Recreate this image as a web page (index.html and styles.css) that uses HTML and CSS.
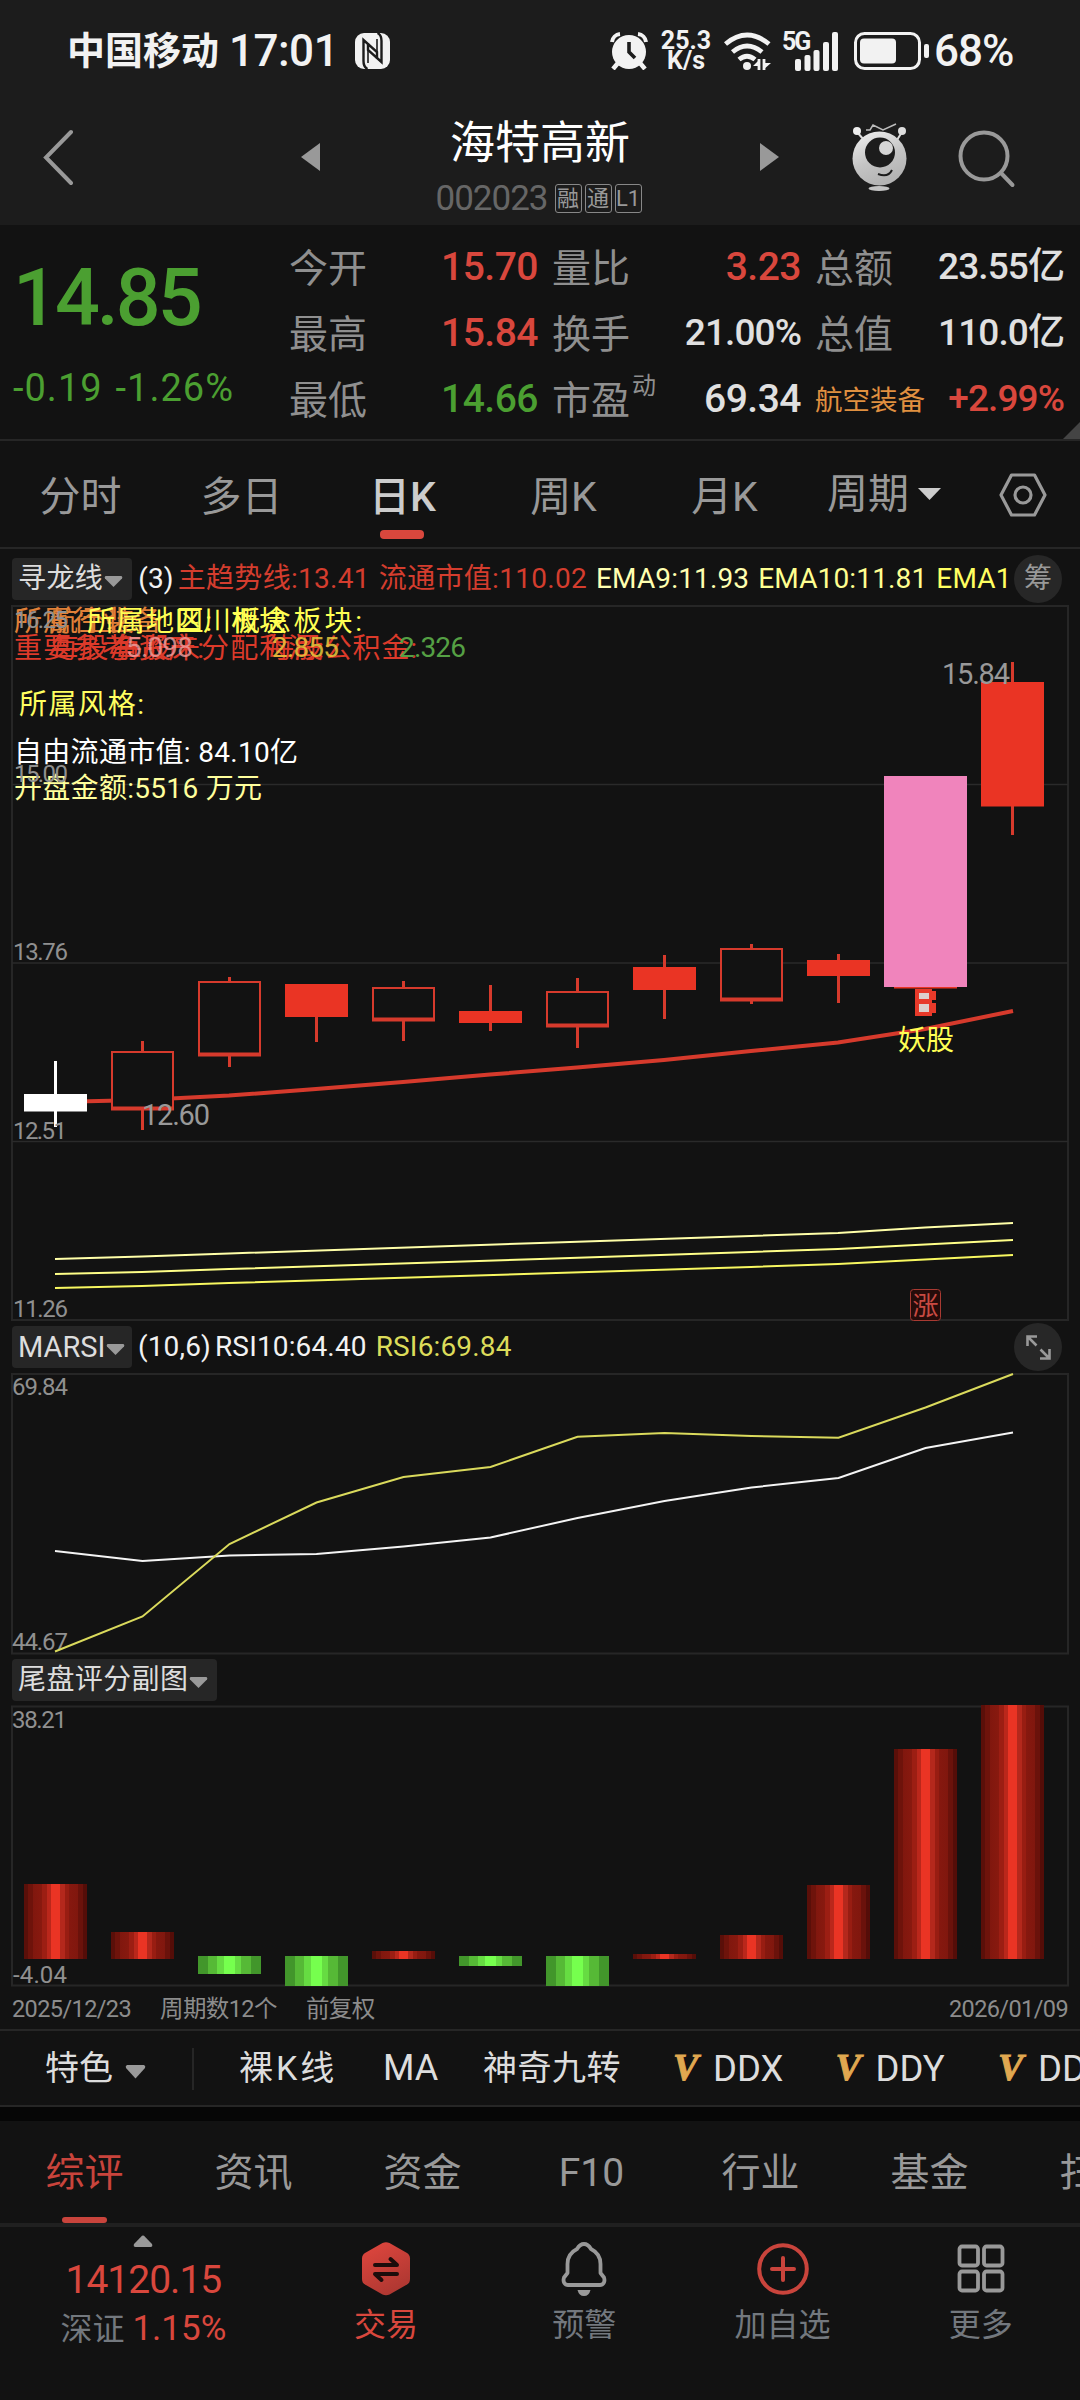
FILE: index.html
```html
<!DOCTYPE html>
<html lang="zh-CN">

<head>
    <meta charset="UTF-8">
    <meta name="viewport" content="width=device-width, initial-scale=1.0">
    <title>海特高新 002023</title>
    <link rel="stylesheet" href="styles.css">
</head>

<body>
    <div class="top">
        <div class="status">
            <span class="carrier">中国移动</span>
            <span class="time">17:01</span>
            <svg class="nfc" width="35" height="36" viewBox="0 0 35 36">
                <rect x="0" y="0" width="35" height="36" rx="9" fill="#f2f2f2" />
                <path d="M12.500 36Q8.500 34 8.500 28V7L22 19V26M22.500 0Q26.500 2 26.500 8V29L13 17V10" fill="none" stroke="#1c1c1c" stroke-width="2.400" />
                <path d="M13 15V30M22 6V21" stroke="#1c1c1c" stroke-width="1.600" />
            </svg>
            <div class="status-right">
                <svg class="alarm" width="38" height="38" viewBox="0 0 38 38">
                    <circle cx="19" cy="20" r="17" fill="#f2f2f2" />
                    <path d="M2 10A9 9 0 0 1 10 2M28 2A9 9 0 0 1 36 10" fill="none" stroke="#f2f2f2" stroke-width="4" />
                    <path d="M8 31L3 37M30 31L35 37" stroke="#f2f2f2" stroke-width="4.500" />
                    <path d="M19 10V20L25 26" fill="none" stroke="#1c1c1c" stroke-width="3.600" />
                </svg>
                <div class="speed"><span>25.3</span><span>K/s</span></div>
                <svg class="wifi" width="48" height="39" viewBox="0 0 48 39">
                    <g fill="none" stroke="#f2f2f2" stroke-width="4.800">
                        <path d="M1.500 12Q23 -6 45 12" />
                        <path d="M8.500 20Q23 8 38 20" />
                        <path d="M15 27.500Q23 21 31 27.500" />
                    </g>
                    <circle cx="23" cy="34" r="4" fill="#f2f2f2" />
                    <path d="M35 27V38M40 27V38" stroke="#f2f2f2" stroke-width="2.800" />
                    <path d="M36 27L29 34H36ZM39 38L47 31H39Z" fill="#f2f2f2" />
                </svg>
                <div class="signal">
                    <span>5G</span>
                    <svg width="44" height="39" viewBox="0 0 44 39">
                        <g fill="#f2f2f2">
                            <rect x="0" y="27" width="6" height="12" rx="2" />
                            <rect x="9.500" y="23" width="6" height="16" rx="2" />
                            <rect x="18.500" y="18" width="6" height="21" rx="2" />
                            <rect x="28" y="10" width="6" height="29" rx="2" />
                            <rect x="37" y="0" width="6" height="39" rx="2" />
                        </g>
                    </svg>
                </div>
                <svg class="battery" width="76" height="39" viewBox="0 0 76 39">
                    <rect x="1.500" y="1.500" width="64" height="35" rx="9" fill="none" stroke="#f2f2f2" stroke-width="3" />
                    <rect x="6" y="6.500" width="36" height="25" rx="4" fill="#f2f2f2" />
                    <rect x="70" y="12" width="5" height="14" rx="2" fill="#f2f2f2" />
                </svg>
                <span class="percent">68%</span>
            </div>
        </div>
        <div class="nav">
            <svg class="back" width="30" height="58" viewBox="0 0 30 58">
                <path d="M28 3L3 28.500L28 54" fill="none" stroke="#999" stroke-width="4" stroke-linecap="round" />
            </svg>
            <svg class="prev" width="19" height="28" viewBox="0 0 19 28"><path d="M19 0V28L0 14Z" fill="#999" /></svg>
            <div class="stock">
                <div class="stock-name">海特高新</div>
                <div class="stock-code"><b>002023</b><i>融</i><i>通</i><i>L1</i></div>
            </div>
            <svg class="next" width="19" height="28" viewBox="0 0 19 28"><path d="M0 0V28L19 14Z" fill="#999" /></svg>
            <svg class="robot" width="56" height="70" viewBox="0 0 56 70">
                <defs>
                    <linearGradient id="robotBody" x1="0" y1="0" x2=".4" y2="1">
                        <stop offset="0" stop-color="#f2f2f2" />
                        <stop offset=".6" stop-color="#c4c4c4" />
                        <stop offset="1" stop-color="#b4b4b4" />
                    </linearGradient>
                </defs>
                <path d="M5 9L12 17M50 9L45 17" stroke="#ddd" stroke-width="2" />
                <circle cx="5" cy="8" r="4" fill="#eee" />
                <circle cx="50" cy="8" r="4" fill="#ddd" />
                <path d="M14 7H18L21 2L31 7L44 1" fill="none" stroke="#bbb" stroke-width="1.500" />
                <circle cx="27.500" cy="35.500" r="27" fill="url(#robotBody)" />
                <circle cx="28" cy="29.500" r="15" fill="#1c1c1c" />
                <circle cx="34" cy="25" r="7" fill="#d5d5d5" />
                <path d="M26 51Q36 55 40 47" fill="none" stroke="#1c1c1c" stroke-width="2" />
                <ellipse cx="27" cy="65.500" rx="10.500" ry="2.500" fill="#c4c4c4" />
            </svg>
            <svg class="search" width="58" height="60" viewBox="0 0 58 60">
                <circle cx="26" cy="28" r="23.500" fill="none" stroke="#999" stroke-width="4" />
                <path d="M43 45L54.500 57" stroke="#999" stroke-width="4" stroke-linecap="round" />
            </svg>
        </div>
    </div>

    <div class="quote">
        <div class="price">
            <div class="price-now">14.85</div>
            <div class="price-diff"><span>-0.19</span><span>-1.26%</span></div>
        </div>
        <div class="quote-grid">
            <div class="cell"><label>今开</label><span class="up">15.70</span></div>
            <div class="cell"><label>量比</label><span class="up">3.23</span></div>
            <div class="cell"><label>总额</label><span class="small">23.55亿</span></div>
            <div class="cell"><label>最高</label><span class="up">15.84</span></div>
            <div class="cell"><label>换手</label><span class="small">21.00%</span></div>
            <div class="cell"><label>总值</label><span class="small">110.0亿</span></div>
            <div class="cell"><label>最低</label><span class="down">14.66</span></div>
            <div class="cell"><label>市盈<sup>动</sup></label><span>69.34</span></div>
            <div class="cell"><label class="sector">航空装备</label><span class="up small">+2.99%</span></div>
        </div>
        <svg class="corner" width="17" height="17" viewBox="0 0 17 17"><path d="M17 0V17H0Z" fill="#444" /></svg>
    </div>

    <div class="periods">
        <div class="period">分时</div>
        <div class="period">多日</div>
        <div class="period active">日K</div>
        <div class="period">周K</div>
        <div class="period">月K</div>
        <div class="period more">周期<svg width="23" height="13" viewBox="0 0 23 13"><path d="M0 0H23L11.500 12Z" fill="#ccc" /></svg></div>
        <svg class="setting" width="48" height="44" viewBox="0 0 48 44">
            <path d="M12.500 2H35.500L46 22L35.500 42H12.500L2 22Z" fill="none" stroke="#999" stroke-width="3.200" stroke-linejoin="round" />
            <circle cx="24" cy="22" r="8" fill="none" stroke="#999" stroke-width="3.200" />
        </svg>
    </div>

    <div class="indicator main-indicator">
        <div class="pick">寻龙线<svg width="19" height="11" viewBox="0 0 19 11"><path d="M1.500 0H17.500Q19 1 18 2.500L9.500 11L1 2.500Q0 1 1.500 0Z" fill="#999" /></svg></div>
        <span class="white param">(3)</span>
        <span class="red">主趋势线:13.41</span>
        <span class="red">流通市值:110.02</span>
        <span class="y1">EMA9:11.93</span>
        <span class="y2">EMA10:11.81</span>
        <span class="y3">EMA1</span>
        <div class="round">筹</div>
    </div>

    <svg class="chart" width="1080" height="718" viewBox="0 604 1080 718">
        <g class="frame">
            <rect x="12" y="606" width="1056" height="714" />
            <path d="M12 784.500H1068M12 963H1068M12 1141.500H1068" />
        </g>

        <path class="trend" d="M55 1102L142 1100L229 1095.500L316 1089L403 1082L490 1074.500L577 1067.500L664 1060L751 1051L838 1042.500L925 1029L1013 1011" />
        <g class="candle hollow">
            <rect x="112" y="1052" width="61" height="57" />
            <rect x="199" y="982" width="61" height="73" />
            <rect x="373" y="988" width="61" height="32" />
            <rect x="547" y="992" width="61" height="34" />
            <rect x="721" y="949" width="61" height="51" />
            <path class="thick" d="M111 1108.500H174M198 1054.500H261M372 1019.500H435M546 1025.500H609M720 999.500H783" />
        </g>
        <g class="wick">
            <path d="M142.500 1041V1052M142.500 1109V1130" />
            <path d="M229.500 977V982M229.500 1056V1067" />
            <path d="M316.500 1017V1042" />
            <path d="M403.500 981V988M403.500 1020V1041" />
            <path d="M490.500 985V1031" />
            <path d="M577.500 978V992M577.500 1026V1048" />
            <path d="M664.500 955V1019" />
            <path d="M751.500 944V949M751.500 1000V1004" />
            <path d="M838.500 954V1003" />
            <path d="M1012.500 662V835" />
        </g>
        <g class="candle solid">
            <rect x="285" y="984" width="63" height="33" />
            <rect x="459" y="1011" width="63" height="12" />
            <rect x="633" y="967" width="63" height="23" />
            <rect x="807" y="960" width="63" height="16" />
            <rect x="894" y="980" width="63" height="8.500" />
            <rect x="981" y="682" width="63" height="124.500" />
        </g>
        <path d="M55.500 1061V1127" stroke="#fff" stroke-width="3" />
        <rect x="24" y="1094" width="63" height="17.500" fill="#fff" />
        <rect x="884" y="776" width="83" height="211" fill="#f084bc" />
        <g class="mark-b">
            <rect x="915" y="989" width="17" height="27" fill="#e83a2a" />
            <rect x="932" y="991" width="4" height="9" fill="#e83a2a" />
            <rect x="932" y="1003" width="4" height="10" fill="#e83a2a" />
            <rect x="919" y="993" width="10" height="6" fill="#ddd0cc" />
            <rect x="919" y="1004" width="10" height="8" fill="#ddd0cc" />
        </g>

        <path class="ema" stroke="#ffffa8" d="M55 1259L142 1256.500L229 1253.500L540 1243L751 1236L838 1233L925 1227.500L1013 1223" />
        <path class="ema" stroke="#ffff88" d="M55 1274L142 1272L229 1269L540 1259L751 1252L838 1249L925 1244.500L1013 1240" />
        <path class="ema" stroke="#f8f860" d="M55 1288L142 1286L229 1283L540 1273.500L751 1267L838 1264L925 1259.500L1013 1255" />

        <g class="gray-tip">
            <text x="142" y="1125" textLength="68">12.60</text>
            <text x="942" y="684" textLength="68">15.84</text>
        </g>
        <text class="note" x="898" y="1050" fill="#ffff54">妖股</text>
        <rect x="910.500" y="1289.500" width="30" height="31" rx="3" fill="#250c0a" stroke="#a83a32" stroke-width="1" />
        <text x="912.500" y="1314.500" font-size="26" fill="#c84a42">涨</text>

        <!-- 左上角说明文字,坐标由公式给出,会互相重叠 -->
        <g class="note">
            <g fill="#e08038">
                <text x="14" y="631" textLength="124">所属行业:</text>
                <text x="50" y="631">航空装备</text>
            </g>
            <g fill="#ffff54">
                <text x="87" y="631" textLength="125">所属地区:</text>
                <text x="175" y="631">四川板块</text>
                <text x="232" y="631" textLength="130">概念板块:</text>
            </g>
            <g fill="#dc3a2a">
                <text x="14" y="658" textLength="124">重要参考:</text>
                <text x="51" y="658" textLength="153">每股净资产:</text>
                <text x="114" y="658" textLength="210">每股未分配利润:</text>
                <text x="266" y="658" textLength="151">每股公积金:</text>
            </g>
            <text x="126" y="657" fill="#f0a0a0" opacity=".8" textLength="67">5.098</text>
            <text x="272" y="657" fill="#e8c83c" opacity=".85" textLength="67">2.855</text>
            <text x="399" y="657" fill="#55a044" textLength="67">2.326</text>
            <text x="19" y="714" fill="#ffff60" textLength="125">所属风格:</text>
            <text x="14" y="762" fill="#fff" textLength="284">自由流通市值: 84.10亿</text>
            <text x="14" y="798" fill="#ffff9c" textLength="248">开盘金额:5516 万元</text>
        </g>
        <g class="ylabel">
            <text x="14" y="628" textLength="54">16.25</text>
            <text x="14" y="782" textLength="54">15.00</text>
            <text x="13" y="960" textLength="55">13.76</text>
            <text x="13" y="1139" textLength="54">12.51</text>
            <text x="13" y="1317" textLength="55">11.26</text>
        </g>
    </svg>

    <div class="indicator rsi-indicator">
        <div class="pick latin">MARSI<svg width="19" height="11" viewBox="0 0 19 11"><path d="M1.500 0H17.500Q19 1 18 2.500L9.500 11L1 2.500Q0 1 1.500 0Z" fill="#999" /></svg></div>
        <span class="white param">(10,6)</span>
        <span class="white rsi10">RSI10:64.40</span>
        <span class="y4">RSI6:69.84</span>
        <div class="round">
            <svg width="25" height="25" viewBox="0 0 25 25">
                <path d="M1.500 11V1.500H11M1.500 1.500L10.500 10.500M14 23.500H23.500V14M23.500 23.500L14.500 14.500" fill="none" stroke="#999" stroke-width="2.600" />
            </svg>
        </div>
    </div>

    <svg class="chart" width="1080" height="282" viewBox="0 1373 1080 282">
        <g class="frame"><rect x="12" y="1374" width="1056" height="279.500" /></g>
        <g class="ylabel">
            <text x="12" y="1395" textLength="56">69.84</text>
            <text x="12" y="1650" textLength="56">44.67</text>
        </g>
        <path class="rsi" stroke="#f4f4f4" d="M55 1551L142.500 1561L229.500 1555.500L316.500 1554L403.500 1546.500L490.500 1537.500L577.500 1518L664.500 1501L751.500 1487.500L838.500 1478L925.500 1448L1013 1432.500" />
        <path class="rsi" stroke="#dada5c" d="M55 1651.500L142.500 1616.500L229.500 1544L316.500 1502.500L403.500 1477L490.500 1467L577.500 1436.700L664.500 1433L751.500 1436L838.500 1437.700L925.500 1407.500L1013 1374" />
    </svg>

    <div class="indicator score-indicator">
        <div class="pick">尾盘评分副图<svg width="19" height="11" viewBox="0 0 19 11"><path d="M1.500 0H17.500Q19 1 18 2.500L9.500 11L1 2.500Q0 1 1.500 0Z" fill="#999" /></svg></div>
    </div>

    <svg class="chart" width="1080" height="284" viewBox="0 1704 1080 284">
        <defs>
            <linearGradient id="barRed">
                <stop offset=".07" stop-color="#5a0f09" /><stop offset=".07" stop-color="#6e130b" />
                <stop offset=".14" stop-color="#6e130b" /><stop offset=".14" stop-color="#80170e" />
                <stop offset=".28" stop-color="#88190f" /><stop offset=".28" stop-color="#9c1e13" />
                <stop offset=".36" stop-color="#9c1e13" /><stop offset=".36" stop-color="#ba271b" />
                <stop offset=".43" stop-color="#ba271b" /><stop offset=".43" stop-color="#ea3424" />
                <stop offset=".57" stop-color="#ea3424" /><stop offset=".57" stop-color="#b4281c" />
                <stop offset=".65" stop-color="#b4281c" /><stop offset=".65" stop-color="#981d12" />
                <stop offset=".72" stop-color="#981d12" /><stop offset=".72" stop-color="#86180f" />
                <stop offset=".86" stop-color="#80170e" /><stop offset=".86" stop-color="#6a120b" />
                <stop offset=".93" stop-color="#6a120b" /><stop offset=".93" stop-color="#540d08" />
            </linearGradient>
            <linearGradient id="barGreen">
                <stop offset=".16" stop-color="#42962b" /><stop offset=".16" stop-color="#56b936" />
                <stop offset=".3" stop-color="#56b936" /><stop offset=".3" stop-color="#66dc42" />
                <stop offset=".42" stop-color="#66dc42" /><stop offset=".42" stop-color="#76ff4e" />
                <stop offset=".58" stop-color="#76ff4e" /><stop offset=".58" stop-color="#66dc42" />
                <stop offset=".69" stop-color="#66dc42" /><stop offset=".69" stop-color="#56b936" />
                <stop offset=".84" stop-color="#56b936" /><stop offset=".84" stop-color="#42962b" />
            </linearGradient>
        </defs>
        <g class="frame"><rect x="12" y="1706.500" width="1056" height="279" /></g>
        <g class="ylabel">
            <text x="12" y="1728" textLength="55">38.21</text>
            <text x="13" y="1983" textLength="54">-4.04</text>
        </g>
        <g fill="url(#barRed)">
            <rect x="24" y="1884" width="63" height="75" />
            <rect x="111" y="1932" width="63" height="27" />
            <rect x="372" y="1951" width="63" height="8" />
            <rect x="633" y="1954" width="63" height="5" />
            <rect x="720" y="1935" width="63" height="24" />
            <rect x="807" y="1885" width="63" height="74" />
            <rect x="894" y="1749" width="63" height="210" />
            <rect x="981" y="1705" width="63" height="254" />
        </g>
        <g fill="url(#barGreen)">
            <rect x="198" y="1956" width="63" height="18" />
            <rect x="285" y="1956" width="63" height="30" />
            <rect x="459" y="1956" width="63" height="10" />
            <rect x="546" y="1956" width="63" height="30" />
        </g>
    </svg>

    <div class="dates">
        <span>2025/12/23</span>
        <span>周期数12个</span>
        <span>前复权</span>
        <span class="last">2026/01/09</span>
    </div>

    <div class="features">
        <div class="feature-menu">特色<svg width="21" height="14" viewBox="0 0 21 14"><path d="M2 0H19Q21 1 20 3L10.500 13.500L1 3Q0 1 2 0Z" fill="#999" /></svg></div>
        <span class="f-k">裸K线</span>
        <span class="f-ma">MA</span>
        <span class="f-nine">神奇九转</span>
        <span class="f-vip"><em>V</em>DDX</span>
        <span class="f-vip"><em>V</em>DDY</span>
        <span class="f-vip"><em>V</em>DDZ</span>
    </div>

    <div class="tabs">
        <div class="tab active">综评</div>
        <div class="tab">资讯</div>
        <div class="tab">资金</div>
        <div class="tab">F10</div>
        <div class="tab">行业</div>
        <div class="tab">基金</div>
        <div class="tab">扫雷</div>
    </div>

    <div class="footer">
        <div class="index">
            <svg width="20" height="12" viewBox="0 0 20 12"><path d="M9 .800Q10 0 11 .800L19 9Q20 12 17.500 12H2.500Q0 12 1 9Z" fill="#999" /></svg>
            <div class="index-value">14120.15</div>
            <div class="index-name">深证 <span>1.15%</span></div>
        </div>
        <div class="action trade">
            <svg width="50" height="54" viewBox="0 0 50 54">
                <defs>
                    <linearGradient id="tradeBg" x1="0" y1="0" x2=".5" y2="1">
                        <stop offset=".2" stop-color="#d8443c" />
                        <stop offset="1" stop-color="#b03832" />
                    </linearGradient>
                </defs>
                <path d="M21.500 1Q25 -.500 28.500 1L46 11Q49 13 49 16.500V37Q49 40.500 46 42.500L28.500 52.500Q25 54 21.500 52.500L4 42.500Q1 40.500 1 37V16.500Q1 13 4 11Z" fill="url(#tradeBg)" />
                <path d="M14 23H36L29.500 17M36 32H14L20.500 38" fill="none" stroke="#1c0c0b" stroke-width="4" stroke-linecap="round" stroke-linejoin="round" />
            </svg>
            <span>交易</span>
        </div>
        <div class="action">
            <svg width="46" height="54" viewBox="0 0 46 54">
                <path d="M23 2C19 2 17.500 4.500 16 7C10 10 6.500 15 6.500 22V31L3 35.500C1.500 40 4 43 7 43H39C42 43 44.500 40 43 35.500L39.500 31V22C39.500 15 36 10 30 7C28.500 4.500 27 2 23 2Z" fill="none" stroke="#999" stroke-width="3.800" stroke-linejoin="round" />
                <path d="M16.500 48H29.500Q28 54 23 54Q18 54 16.500 48Z" fill="#999" />
            </svg>
            <span>预警</span>
        </div>
        <div class="action">
            <svg width="54" height="54" viewBox="0 0 54 54">
                <circle cx="27" cy="27" r="23.800" fill="none" stroke="#c9443c" stroke-width="4" />
                <path d="M16 27H38M27 16V38" stroke="#c9443c" stroke-width="4" stroke-linecap="round" />
            </svg>
            <span>加自选</span>
        </div>
        <div class="action">
            <svg width="48" height="54" viewBox="0 0 48 54">
                <g fill="none" stroke="#999" stroke-width="3.800">
                    <rect x="2.500" y="4.500" width="18.500" height="19" rx="2.500" />
                    <rect x="27" y="4.500" width="18.500" height="19" rx="2.500" />
                    <rect x="2.500" y="29.500" width="18.500" height="19" rx="2.500" />
                    <rect x="27" y="29.500" width="18.500" height="19" rx="2.500" />
                </g>
            </svg>
            <span>更多</span>
        </div>
    </div>
</body>

</html>
```
FILE: styles.css
```css
* {
    margin: 0;
    padding: 0;
    box-sizing: border-box;
}

body {
    width: 1080px;
    height: 2400px;
    overflow: hidden;
    background-color: #121212;
    color: #999;
    font-family: Roboto, "Noto Sans CJK SC", sans-serif;
}

svg {
    display: block;
    flex: none;
}

i,
em {
    font-style: normal;
}

/* 状态栏 + 标题栏 */
.top {
    height: 225px;
    background-color: #1c1c1c;
}

.status {
    height: 102px;
    padding-left: 67px;
    display: flex;
    align-items: center;
    color: #f2f2f2;
}

.carrier {
    width: 162px;
    font-size: 38px;
    font-weight: 700;
    line-height: 60px;
}

.time {
    width: 126px;
    font-size: 44px;
    font-weight: 500;
    letter-spacing: -0.5px;
    line-height: 60px;
}

.status-right {
    margin-left: 220px;
    display: flex;
    align-items: center;
}

.speed {
    width: 52px;
    margin-left: 12px;
    font-size: 25px;
    font-weight: 700;
    line-height: 20px;
    text-align: center;
}

.speed span {
    display: block;
}

.wifi {
    margin-left: 12px;
}

.signal {
    position: relative;
    margin-left: 23px;
}

.signal span {
    position: absolute;
    left: -13px;
    top: 0;
    font-size: 25px;
    font-weight: 700;
    letter-spacing: -2px;
    line-height: 20px;
}

.battery {
    margin-left: 15px;
}

.percent {
    margin-left: 4px;
    font-size: 44px;
    font-weight: 500;
    letter-spacing: -1px;
}

.nav {
    display: flex;
    height: 123px;
    padding-left: 43px;
}

.back {
    margin-top: 27px;
}

.prev {
    margin: 41px 0 0 228px;
}

.stock {
    width: 440px;
    text-align: center;
}

.stock-name {
    margin-top: 12px;
    color: #fff;
    font-size: 45px;
    line-height: 60px;
}

.stock-code {
    display: flex;
    justify-content: center;
    align-items: center;
    height: 48px;
    padding-top: 1px;
}

.stock-code b {
    margin-right: 7px;
    color: #666;
    font-size: 35px;
    font-weight: 400;
    letter-spacing: -1px;
}

.stock-code i {
    width: 27px;
    height: 29px;
    margin-right: 3px;
    border: 1px solid #888;
    border-radius: 3px;
    font-size: 22px;
    line-height: 27px;
}

.next {
    margin-top: 41px;
}

.robot {
    margin: 21px 0 0 73px;
}

.search {
    margin: 26px 0 0 50px;
}

/* 行情 */
.quote {
    position: relative;
    display: flex;
    height: 216px;
    border-bottom: 2px solid #262626;
}

.price {
    width: 289px;
    color: #4b9f31;
}

.price-now {
    margin-top: 28px;
    padding-left: 13px;
    font-size: 79px;
    font-weight: 500;
    letter-spacing: -3px;
    line-height: 90px;
}

.price-diff {
    display: flex;
    gap: 13px;
    margin-top: 20px;
    padding-left: 13px;
    font-size: 38px;
    letter-spacing: 1px;
    line-height: 50px;
}

.quote-grid {
    display: grid;
    grid-template-columns: 249px 249px 249px;
    grid-auto-rows: 66px;
    column-gap: 14px;
    padding-top: 9px;
}

.cell {
    display: flex;
    justify-content: space-between;
    font-size: 39px;
    line-height: 66px;
    white-space: nowrap;
}

.cell label {
    position: relative;
    padding-top: 2px;
    color: #8f8f8f;
}

.cell sup {
    position: absolute;
    left: 80px;
    top: -13px;
    font-size: 24px;
}

.cell span {
    color: #e0e0e0;
    font-weight: 500;
    letter-spacing: -0.5px;
}

.cell .small {
    font-size: 37px;
    letter-spacing: -0.9px;
}

.cell .up {
    color: #d9473d;
}

.cell .down {
    color: #4b9f31;
}

.cell .sector {
    color: #e09040;
    font-size: 27.5px;
}

.corner {
    position: absolute;
    right: 0;
    bottom: 0;
}

/* 周期 */
.periods {
    display: flex;
    height: 108px;
    border-bottom: 2px solid #262626;
}

.period {
    position: relative;
    width: 161px;
    font-size: 41px;
    line-height: 112px;
    text-align: center;
}

.period.active {
    color: #ccc;
    font-weight: 500;
}

.period.active::after {
    content: '';
    position: absolute;
    left: 58px;
    bottom: 8px;
    width: 44px;
    height: 9px;
    border-radius: 4px;
    background-color: #d9473d;
}

.period.more {
    display: flex;
    align-items: center;
    width: 194px;
    padding-left: 22px;
}

.period.more svg {
    margin-left: 9px;
}

.setting {
    margin-top: 32px;
}

/* 指标行 */
.indicator {
    display: flex;
    align-items: center;
    padding-left: 12px;
    font-size: 28px;
    line-height: 42px;
    white-space: nowrap;
}

.main-indicator {
    height: 55px;
    padding-top: 5px;
}

.rsi-indicator {
    height: 51px;
    padding-bottom: 1px;
}

.score-indicator {
    height: 49px;
    padding-top: 1px;
}

.pick {
    display: flex;
    align-items: center;
    height: 42px;
    margin-right: 6px;
    padding: 0 9px 0 6px;
    border-radius: 4px;
    background-color: #262626;
    color: #ddd;
    letter-spacing: 0.4px;
}

.pick svg {
    margin: 4px 0 0 1px;
}

.pick.latin {
    width: 120px;
    font-size: 29px;
    letter-spacing: 0;
}

.indicator span {
    margin-right: 9px;
    letter-spacing: 0.15px;
}

.indicator .param {
    margin-right: 4px;
}

.white {
    color: #f2f2f2;
}

.indicator .red {
    color: #d43d2e;
    letter-spacing: 0.3px;
}

.y1 {
    color: #ffffb0;
}

.y2 {
    color: #ffff90;
}

.indicator .y3 {
    margin-right: 0;
    color: #ffff60;
}

.y4 {
    color: #dcdc5a;
}

.round {
    display: flex;
    flex: none;
    align-items: center;
    justify-content: center;
    width: 48px;
    height: 48px;
    margin: 0 18px 0 auto;
    border-radius: 50%;
    background-color: #272727;
}

/* 图表 */
.frame rect {
    fill: none;
    stroke: #262626;
    stroke-width: 2;
}

.frame path {
    stroke: #2a2a2a;
    stroke-width: 1.5;
}

.ylabel text {
    fill: #909090;
    font-size: 24px;
}

.gray-tip text {
    fill: #999;
    font-size: 29px;
}

.note {
    font-size: 28px;
}

.trend {
    fill: none;
    stroke: #d63a2c;
    stroke-width: 4;
}

.hollow rect {
    fill: #121212;
    stroke: #d63a2c;
    stroke-width: 2;
}

.hollow .thick {
    stroke: #d63a2c;
    stroke-width: 4;
}

.solid rect {
    fill: #ea3424;
}

.wick path {
    stroke: #d63a2c;
    stroke-width: 3;
}

.ema,
.rsi {
    fill: none;
    stroke-width: 2;
}

.dates {
    display: flex;
    height: 41px;
    padding: 0 12px;
    color: #8c8c8c;
    font-size: 23.5px;
    letter-spacing: -0.6px;
    line-height: 43px;
}

.dates span {
    margin-right: 29px;
}

.dates .last {
    margin: 0 0 0 auto;
}

/* 特色指标 */
.features {
    display: flex;
    height: 78px;
    overflow: hidden;
    border-top: 2px solid #262626;
    border-bottom: 2px solid #262626;
    color: #ddd;
    font-size: 34px;
    line-height: 75px;
    white-space: nowrap;
}

.features span {
    flex: none;
}

.feature-menu {
    position: relative;
    display: flex;
    flex: none;
    align-items: center;
    width: 239px;
    padding-left: 45px;
}

.feature-menu svg {
    margin: 8px 0 0 12px;
}

.feature-menu::after {
    content: '';
    position: absolute;
    left: 192px;
    top: 17px;
    width: 2px;
    height: 42px;
    background-color: #262626;
}

.f-k {
    width: 144px;
    letter-spacing: 3px;
}

.f-ma {
    width: 100px;
    font-size: 36px;
}

.f-nine {
    width: 190px;
    letter-spacing: 0.5px;
}

.f-vip {
    display: flex;
    width: 162.5px;
    font-size: 36.5px;
}

.f-vip em {
    width: 40px;
    color: #e0a850;
    font-family: "Liberation Serif", serif;
    font-size: 38px;
    font-style: italic;
    font-weight: 700;
    line-height: 72px;
    -webkit-text-stroke: 1px #e0a850;
}

/* 底部标签 */
.tabs {
    display: flex;
    height: 120px;
    overflow: hidden;
    border-top: 14px solid #060606;
    border-bottom: 4px solid #202020;
}

.tab {
    position: relative;
    flex: none;
    width: 169px;
    font-size: 39px;
    line-height: 105px;
    text-align: center;
}

.tab.active {
    color: #c9443c;
}

.tab.active::after {
    content: '';
    position: absolute;
    left: 62px;
    bottom: 0;
    width: 45px;
    height: 6px;
    border-radius: 3px;
    background-color: #c9443c;
}

.footer {
    display: flex;
    height: 174px;
    color: #73787e;
    font-size: 32px;
}

.index {
    display: flex;
    flex-direction: column;
    align-items: center;
    width: 287px;
    padding-top: 8px;
}

.index-value {
    margin-top: 8px;
    color: #d9473d;
    font-size: 39px;
    letter-spacing: -1px;
    line-height: 50px;
}

.index-name {
    margin-top: -1px;
    line-height: 50px;
}

.index-name span {
    color: #d9473d;
    font-size: 35px;
}

.action {
    display: flex;
    flex-direction: column;
    align-items: center;
    width: 198.5px;
    padding-top: 15px;
}

.action span {
    margin-top: 4px;
    line-height: 50px;
}

.trade span {
    color: #d9473d;
}
```
